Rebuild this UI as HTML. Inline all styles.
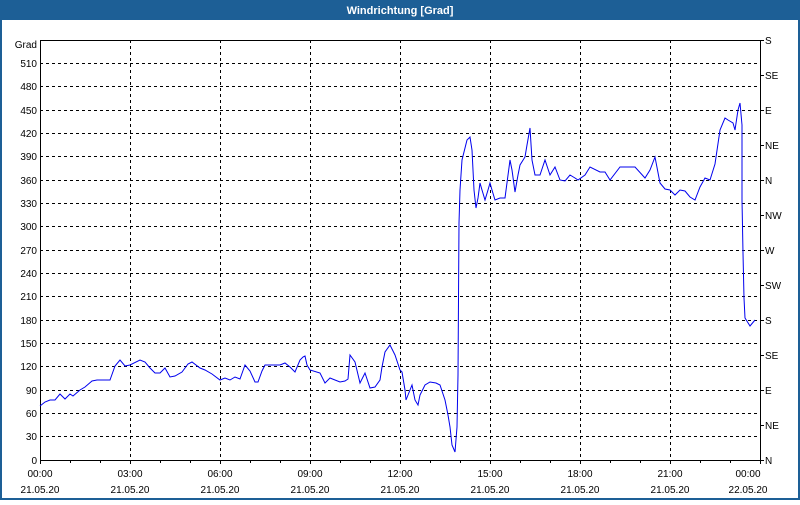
<!DOCTYPE html>
<html><head><style>
body{margin:0;width:800px;height:500px;background:#fff;overflow:hidden;font-family:"Liberation Sans",sans-serif}
</style></head><body>
<svg width="800" height="500" xmlns="http://www.w3.org/2000/svg" font-family="Liberation Sans, sans-serif" font-size="10">
<rect x="0" y="0" width="800" height="500" fill="#1d5f96"/>
<rect x="2" y="20" width="796" height="478" fill="#fff"/>
<text x="400" y="14" text-anchor="middle" fill="#fff" font-weight="bold" font-size="11">Windrichtung [Grad]</text>
<g stroke="#000" stroke-width="1" stroke-dasharray="3,3" shape-rendering="crispEdges">
<line x1="130.5" y1="40" x2="130.5" y2="460"/><line x1="220.5" y1="40" x2="220.5" y2="460"/>
<line x1="310.5" y1="40" x2="310.5" y2="460"/><line x1="400.5" y1="40" x2="400.5" y2="460"/>
<line x1="490.5" y1="40" x2="490.5" y2="460"/><line x1="580.5" y1="40" x2="580.5" y2="460"/>
<line x1="670.5" y1="40" x2="670.5" y2="460"/>
<g id="h"></g>
</g>
<g stroke="#000" stroke-dasharray="3,3" shape-rendering="crispEdges">
<line x1="40" y1="63.5" x2="760" y2="63.5"/><line x1="40" y1="86.5" x2="760" y2="86.5"/>
<line x1="40" y1="110.5" x2="760" y2="110.5"/><line x1="40" y1="133.5" x2="760" y2="133.5"/>
<line x1="40" y1="156.5" x2="760" y2="156.5"/><line x1="40" y1="180.5" x2="760" y2="180.5"/>
<line x1="40" y1="203.5" x2="760" y2="203.5"/><line x1="40" y1="226.5" x2="760" y2="226.5"/>
<line x1="40" y1="250.5" x2="760" y2="250.5"/><line x1="40" y1="273.5" x2="760" y2="273.5"/>
<line x1="40" y1="296.5" x2="760" y2="296.5"/><line x1="40" y1="320.5" x2="760" y2="320.5"/>
<line x1="40" y1="343.5" x2="760" y2="343.5"/><line x1="40" y1="366.5" x2="760" y2="366.5"/>
<line x1="40" y1="390.5" x2="760" y2="390.5"/><line x1="40" y1="413.5" x2="760" y2="413.5"/>
<line x1="40" y1="436.5" x2="760" y2="436.5"/>
</g>
<rect x="40.5" y="40.5" width="720" height="420" fill="none" stroke="#000" shape-rendering="crispEdges"/>
<g stroke="#000" shape-rendering="crispEdges">
<path d="M40.5 460v4M70.5 460v3M100.5 460v3M130.5 460v4M160.5 460v3M190.5 460v3M220.5 460v4M250.5 460v3M280.5 460v3M310.5 460v4M340.5 460v3M370.5 460v3M400.5 460v4M430.5 460v3M460.5 460v3M490.5 460v4M520.5 460v3M550.5 460v3M580.5 460v4M610.5 460v3M640.5 460v3M670.5 460v4M700.5 460v3M730.5 460v3M760.5 460v4"/>
<path d="M760 40.5h4M760 75.5h4M760 110.5h4M760 145.5h4M760 180.5h4M760 215.5h4M760 250.5h4M760 285.5h4M760 320.5h4M760 355.5h4M760 390.5h4M760 425.5h4M760 460.5h4"/>
</g>
<g text-anchor="end" fill="#000">
<text x="37" y="48">Grad</text><text x="37" y="67">510</text><text x="37" y="90">480</text><text x="37" y="114">450</text><text x="37" y="137">420</text><text x="37" y="160">390</text><text x="37" y="184">360</text><text x="37" y="207">330</text><text x="37" y="230">300</text><text x="37" y="254">270</text><text x="37" y="277">240</text><text x="37" y="300">210</text><text x="37" y="324">180</text><text x="37" y="347">150</text><text x="37" y="370">120</text><text x="37" y="394">90</text><text x="37" y="417">60</text><text x="37" y="440">30</text><text x="37" y="464">0</text>
</g>
<g fill="#000">
<text x="765" y="44">S</text><text x="765" y="79">SE</text><text x="765" y="114">E</text><text x="765" y="149">NE</text><text x="765" y="184">N</text><text x="765" y="219">NW</text><text x="765" y="254">W</text><text x="765" y="289">SW</text><text x="765" y="324">S</text><text x="765" y="359">SE</text><text x="765" y="394">E</text><text x="765" y="429">NE</text><text x="765" y="464">N</text>
</g>
<g text-anchor="middle" fill="#000">
<text x="40" y="477">00:00</text><text x="40" y="493">21.05.20</text>
<text x="130" y="477">03:00</text><text x="130" y="493">21.05.20</text>
<text x="220" y="477">06:00</text><text x="220" y="493">21.05.20</text>
<text x="310" y="477">09:00</text><text x="310" y="493">21.05.20</text>
<text x="400" y="477">12:00</text><text x="400" y="493">21.05.20</text>
<text x="490" y="477">15:00</text><text x="490" y="493">21.05.20</text>
<text x="580" y="477">18:00</text><text x="580" y="493">21.05.20</text>
<text x="670" y="477">21:00</text><text x="670" y="493">21.05.20</text>
<text x="748" y="477">00:00</text><text x="748" y="493">22.05.20</text>
</g>
<polyline fill="none" stroke="#0000ee" stroke-width="1" points="40,406 45,402 50,400 55,400 60,394 65,399 70,394 73,396 80,390 85,387 92,381 97,380 110,380 115,366 120,360 125,366 130,365 140,360 145,362 150,368 155,373 160,373 165,368 170,377 175,376 182,372 188,364 192,362 200,368 205,370 212,374 220,380 225,378 230,380 235,377 240,379 245,365 250,371 255,382 258,382 262,371 265,365 277,365 280,365 285,363 290,367 295,372 300,360 303,357 305,356 307,365 310,370 320,373 325,383 330,378 335,380 340,382 345,381 348,379 350,355 355,362 360,383 365,373 370,388 375,387 380,380 382,367 385,352 390,345 395,355 400,370 402,372 405,390 406,400 410,390 412,385 415,400 418,405 420,395 425,385 430,382 436,383 440,385 445,400 448,415 450,427 452,445 455,452 457,427 458,375 459,223 460,190 462,160 465,148 467,140 470,137 472,150 474,190 476,208 478,198 480,183 482,190 485,200 488,190 490,183 492,190 495,200 500,198 505,198 510,160 512,170 515,192 518,175 520,165 525,157 527,145 530,128 532,160 535,175 540,175 545,160 550,175 555,167 560,180 565,181 570,175 575,178 578,180 585,175 590,167 600,172 605,172 610,180 620,167 625,167 635,167 645,178 650,170 655,157 660,183 665,189 670,190 675,195 680,190 685,191 690,197 695,200 700,187 705,178 710,180 715,164 720,130 725,118 728,120 733,123 735,130 738,110 740,103 742,125 742,200 743,253 744,298 745,318 750,326 755,320"/>
</svg>
</body></html>
